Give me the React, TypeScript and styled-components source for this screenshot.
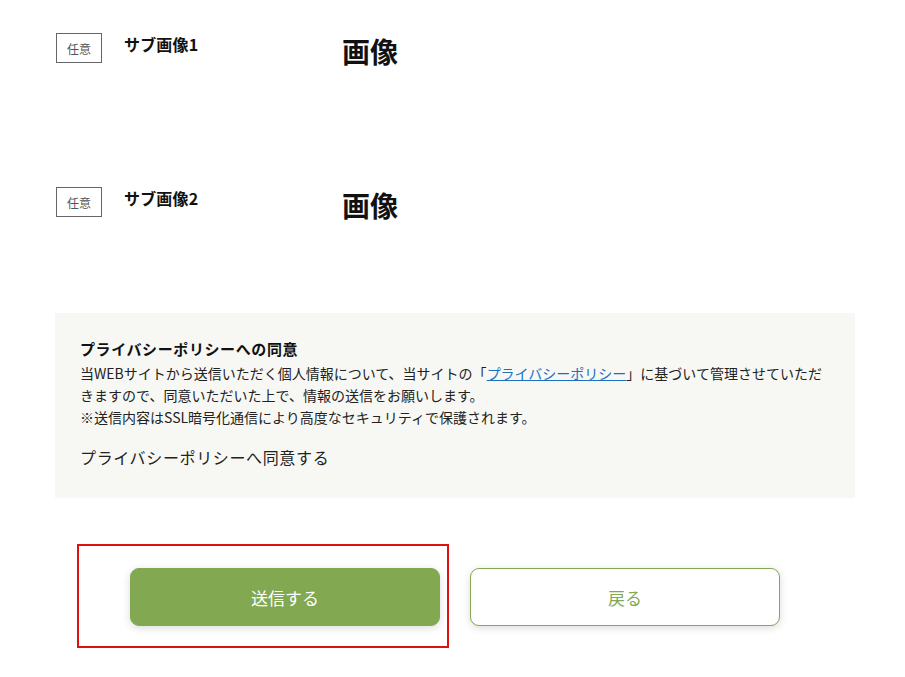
import React from 'react'
import styled, { createGlobalStyle } from 'styled-components'

const GlobalStyle = createGlobalStyle`
  html, body {
    margin: 0;
    padding: 0;
    background: #fff;
  }
  body {
    font-family: "Noto Sans CJK JP", "Noto Sans", sans-serif;
    color: #222;
  }
`

const Page = styled.div`
  width: 800px;
  padding: 33px 0 40px 55px;
`

const FieldList = styled.div`
  display: flex;
  flex-direction: column;
  gap: 114px;
  padding-left: 1px;
`

const Field = styled.div`
  display: flex;
  align-items: flex-start;
  height: 40px;
`

const Badge = styled.span`
  box-sizing: border-box;
  width: 46px;
  height: 30px;
  border: 1px solid #666;
  display: flex;
  align-items: center;
  justify-content: center;
  font-size: 12px;
  color: #555;
  flex-shrink: 0;
`

const Label = styled.div`
  width: 218px;
  margin: -1px 0 0 22px;
  font-size: 16px;
  line-height: 24px;
  font-weight: 700;
  letter-spacing: 0.01em;
  color: #111;
`

const Value = styled.div`
  font-size: 28px;
  line-height: 40px;
  font-weight: 700;
  color: #111;
  margin-top: -2px;
`

const Panel = styled.section`
  margin-top: 86px;
  background: #f7f8f4;
  padding: 25px 25px 28px;
`

const PanelTitle = styled.h3`
  margin: 0;
  font-size: 15px;
  line-height: 22px;
  font-weight: 700;
  letter-spacing: 0.04em;
  color: #111;
`

const PanelText = styled.p`
  margin: 2px 0 0;
  font-size: 14px;
  line-height: 22px;
  color: #222;
`

const PolicyLink = styled.a`
  color: #1d6fc2;
  text-decoration: underline;
`

const Agree = styled.label`
  display: block;
  margin-top: 16px;
  font-size: 16px;
  line-height: 26px;
  letter-spacing: 0.04em;
  color: #222;
`

const ButtonRow = styled.div`
  display: flex;
  justify-content: center;
  gap: 30px;
  margin-top: 70px;
`

const Slot = styled.div`
  position: relative;
`

const Highlight = styled.div`
  position: absolute;
  left: -53px;
  top: -24px;
  width: 372px;
  height: 104px;
  box-sizing: border-box;
  border: 2px solid #dd1111;
  pointer-events: none;
`

const Button = styled.button<{ $primary?: boolean }>`
  width: 310px;
  height: 58px;
  border-radius: 9px;
  font-family: inherit;
  font-size: 17px;
  cursor: pointer;
  box-shadow: 0 2px 8px rgba(0, 0, 0, 0.14);
  border: 1px solid #82a852;
  background: ${({ $primary }) => ($primary ? '#82a852' : '#fff')};
  color: ${({ $primary }) => ($primary ? '#fff' : '#82a852')};
`

export default function App() {
  return (
    <>
      <GlobalStyle />
      <Page>
        <FieldList>
          <Field>
            <Badge>任意</Badge>
            <Label>サブ画像1</Label>
            <Value>画像</Value>
          </Field>
          <Field>
            <Badge>任意</Badge>
            <Label>サブ画像2</Label>
            <Value>画像</Value>
          </Field>
        </FieldList>

        <Panel>
          <PanelTitle>プライバシーポリシーへの同意</PanelTitle>
          <PanelText>
            当WEBサイトから送信いただく個人情報について、当サイトの「
            <PolicyLink href="#">プライバシーポリシー</PolicyLink>
            」に基づいて管理させていただきますので、同意いただいた上で、情報の送信をお願いします。
            <br />
            ※送信内容はSSL暗号化通信により高度なセキュリティで保護されます。
          </PanelText>
          <Agree>プライバシーポリシーへ同意する</Agree>
        </Panel>

        <ButtonRow>
          <Slot>
            <Highlight />
            <Button $primary>送信する</Button>
          </Slot>
          <Slot>
            <Button>戻る</Button>
          </Slot>
        </ButtonRow>
      </Page>
    </>
  )
}
